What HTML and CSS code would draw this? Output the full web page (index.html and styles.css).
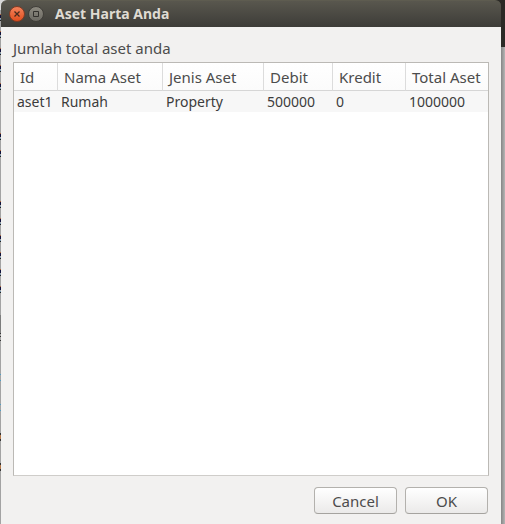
FILE: index.html
```
<!DOCTYPE html>
<html lang="id">
<head>
<meta charset="utf-8">
<title>Aset Harta Anda</title>
<link rel="stylesheet" href="styles.css">
</head>
<body>
<svg class="backdrop-left" width="1" height="524" aria-hidden="true">
  <defs><g id="mark"><path fill="#a8623c" d="M0 0h1v1H0z"/><path fill="#10123c" d="M0 1h1v3H0z"/><path fill="#6f94b0" d="M0 5h1v1H0z"/><path fill="#222" d="M0 6h1v1H0z"/></g></defs>
  <path fill="#a3a3a3" d="M0 0h1v524H0z"/>
  <path fill="#d8d8d8" d="M0 0h1v10H0z"/>
  <path fill="#7c7c7c" d="M0 315h1v18H0z"/>
  <use href="#mark" y="14"/><use href="#mark" y="31"/><use href="#mark" y="48"/><use href="#mark" y="65"/><use href="#mark" y="83"/>
  <use href="#mark" y="133"/><use href="#mark" y="150"/><use href="#mark" y="201"/><use href="#mark" y="218"/><use href="#mark" y="235"/><use href="#mark" y="252"/><use href="#mark" y="269"/><use href="#mark" y="286"/>
  <path fill="#333" d="M0 333h1v1H0zM0 336h1v1H0zM0 340h1v1H0zM0 433h1v2H0zM0 439h1v2H0zM0 463h1v2H0zM0 469h1v2H0z"/>
  <path fill="#4f9cc4" d="M0 374h1v1H0zM0 380h1v1H0zM0 404h1v1H0zM0 410h1v1H0z"/>
  <path fill="#b57a4c" d="M0 435h1v4H0zM0 465h1v4H0z"/>
</svg>
<main class="window">
  <header class="titlebar">
    <button class="window-button" type="button" aria-label="Close">
      <svg width="16" height="16" viewBox="0 0 16 16">
        <defs>
          <linearGradient id="closeFill" x2="0" y2="1"><stop stop-color="#f5845d"/><stop offset="1" stop-color="#e14d1c"/></linearGradient>
        </defs>
        <circle cx="8" cy="8" r="7.5" fill="url(#closeFill)" stroke="#7d3a24"/>
        <path d="M5.500 5.500l5 5m0-5l-5 5" stroke="#4a2b1d" stroke-width="1.300"/>
      </svg>
    </button>
    <button class="window-button" type="button" aria-label="Maximize">
      <svg width="16" height="16" viewBox="0 0 16 16">
        <defs>
          <linearGradient id="maxFill" x2="0" y2="1"><stop stop-color="#8d8a80"/><stop offset="1" stop-color="#6b6962"/></linearGradient>
        </defs>
        <circle cx="8" cy="8" r="7.5" fill="url(#maxFill)" stroke="#3f3d38"/>
        <path d="M5.5 5.5h5v5h-5z" fill="none" stroke="#33312d"/>
      </svg>
    </button>
    <h1 class="title">Aset Harta Anda</h1>
  </header>
  <div class="content">
    <p class="caption" id="caption">Jumlah total aset anda</p>
    <div class="list">
      <table class="assets" aria-labelledby="caption">
        <colgroup><col class="col-id"><col class="col-name"><col class="col-type"><col class="col-debit"><col class="col-credit"><col></colgroup>
        <thead>
          <tr><th>Id</th><th>Nama Aset</th><th>Jenis Aset</th><th>Debit</th><th>Kredit</th><th>Total Aset</th></tr>
        </thead>
        <tbody>
          <tr><td>aset1</td><td>Rumah</td><td>Property</td><td>500000</td><td>0</td><td>1000000</td></tr>
        </tbody>
      </table>
    </div>
    <div class="actions">
      <button class="action" type="button">Cancel</button>
      <button class="action" type="button">OK</button>
    </div>
  </div>
</main>
<div class="backdrop-right"></div>
</body>
</html>
```
FILE: styles.css
```
* { box-sizing: border-box; }

body {
  margin: 0;
  display: flex;
  min-height: 100vh;
  background: #a3a3a3;
  color: #4c4c4c;
  font: 15px/20px "Noto Sans", "Open Sans", sans-serif;
  overflow: hidden;
}

.backdrop-left { flex: none; }

.backdrop-right {
  flex: none;
  width: 4px;
  background:
    linear-gradient(#2b2a26, #2b2a26) top / 100% 47px no-repeat,
    linear-gradient(90deg, #858585, #b5b5b5);
}

.window {
  flex: 1;
  min-width: 0;
  display: flex;
  flex-direction: column;
  background: linear-gradient(90deg, #d8d8d8 50%, #2b2a26 50%) top / 100% 27px no-repeat;
}

.titlebar {
  display: flex;
  align-items: center;
  gap: 3px;
  height: 27px;
  padding: 0 8px;
  border-radius: 6px 6px 0 0;
  border-top: 1px solid #5e5c50;
  background: linear-gradient(#59574e, #3d3c38);
}

.window-button {
  display: flex;
  padding: 0;
  border: 0;
  background: none;
}

.title {
  margin: 0 0 0 8px;
  color: #dfdbd2;
  font-size: 14px;
  font-weight: 700;
}

.content {
  flex: 1;
  display: flex;
  flex-direction: column;
  padding: 11px 12px 10px;
  background: #f2f1f0;
}

.caption { margin: 0 0 4px; }

.list {
  flex: 1;
  border: 1px solid #bbb9b5;
  border-bottom-color: #cfcdca;
  background: #fff;
}

.assets {
  width: 100%;
  table-layout: fixed;
  border-collapse: separate;
  border-spacing: 0;
  white-space: nowrap;
}

.col-id { width: 44px; }
.col-name { width: 105px; }
.col-type { width: 101px; }
.col-debit { width: 69px; }
.col-credit { width: 73px; }

.assets th {
  height: 28px;
  padding: 0 0 0 6px;
  border-right: 1px solid #dcdcdc;
  border-bottom: 1px solid #d6d6d6;
  background: linear-gradient(#fff, #fbfbfb);
  font-weight: 400;
  text-align: left;
}

.assets th:last-child { border-right: 0; }

.assets td {
  height: 21px;
  padding: 0 0 0 3px;
  background: #f7f7f7;
  color: #3c3c3c;
  font-size: 14px;
}

.actions {
  display: flex;
  justify-content: flex-end;
  gap: 8px;
  padding: 11px 1px 0 0;
}

.action {
  width: 83px;
  height: 27px;
  padding: 0;
  border: 1px solid #b3b1ad;
  border-bottom-color: #a5a39f;
  border-radius: 4px;
  background: linear-gradient(#fff, #ebeae9);
  color: #4c4c4c;
  font: inherit;
}
```
